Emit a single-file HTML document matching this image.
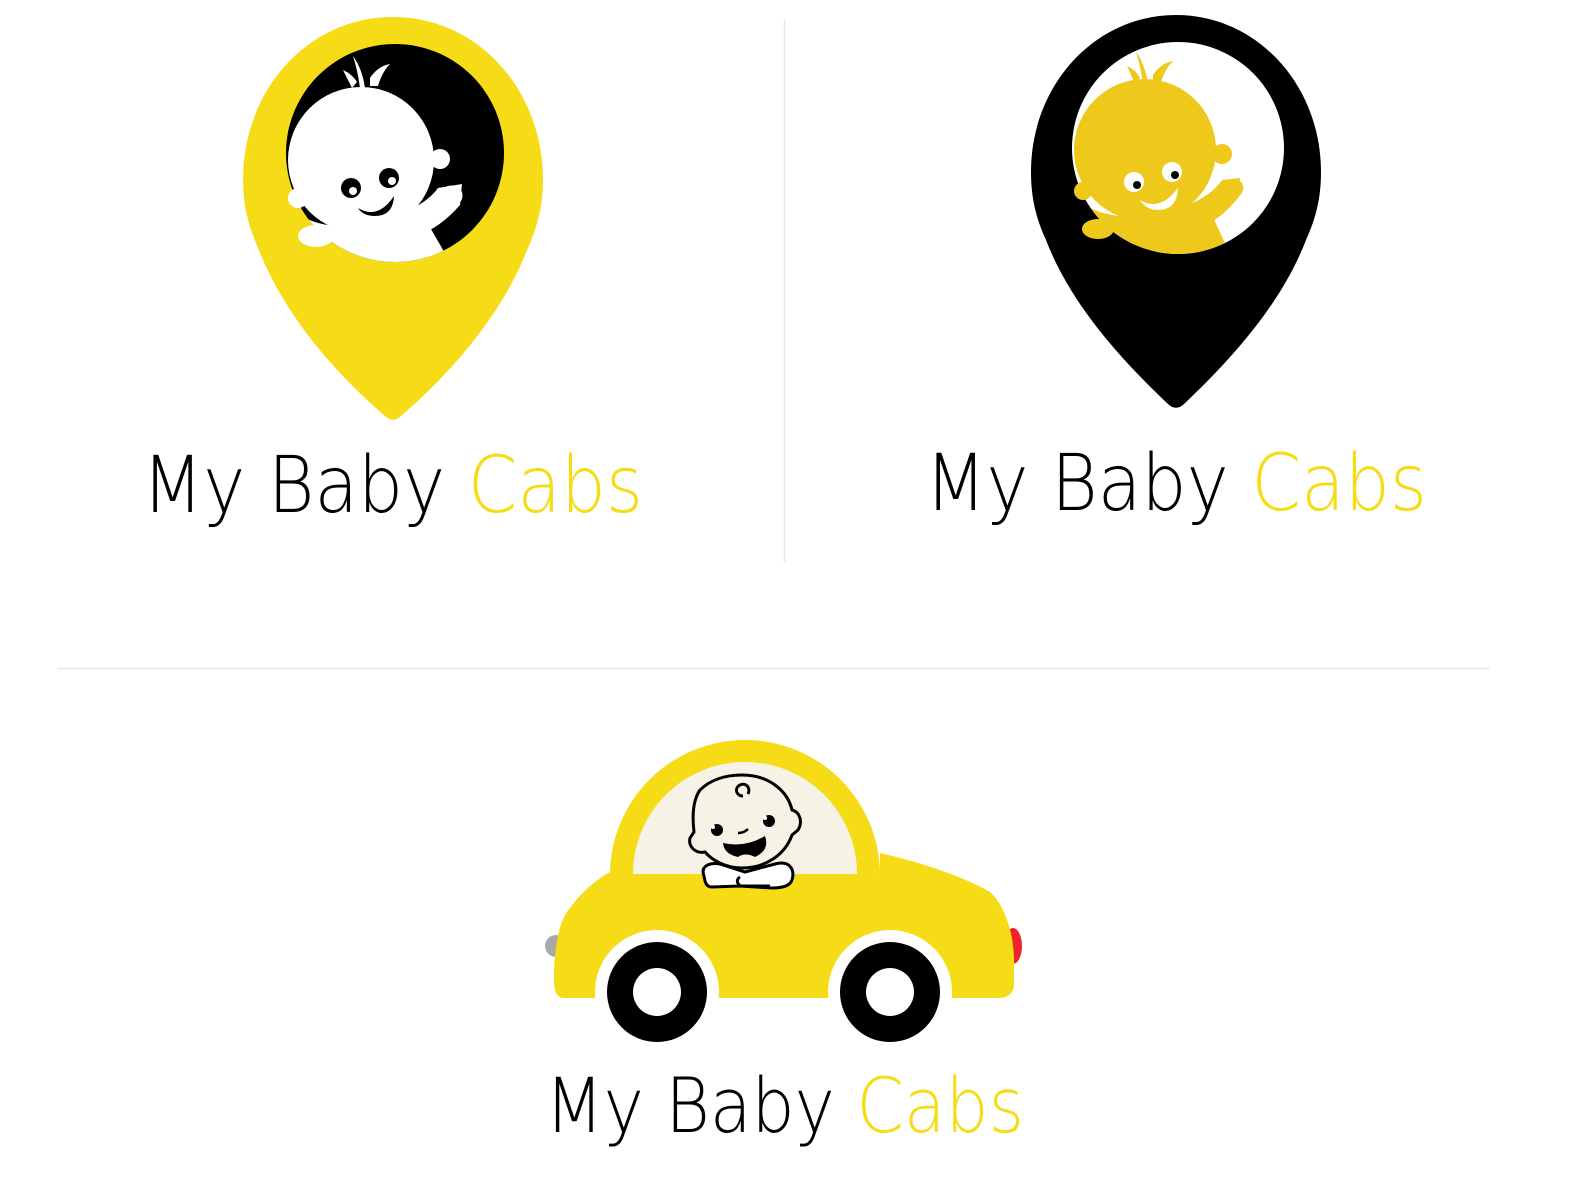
<!DOCTYPE html>
<html><head><meta charset="utf-8"><style>
html,body{margin:0;padding:0;background:#fff;width:1584px;height:1200px;overflow:hidden}
svg{display:block}
text{font-family:"DejaVu Sans","Liberation Sans",sans-serif;font-weight:200}
</style></head><body>
<svg width="1584" height="1200" viewBox="0 0 1584 1200">
<line x1="784.5" y1="20" x2="784.5" y2="562" stroke="#e6e6e6" stroke-width="1.5"/>
<line x1="57" y1="668.5" x2="1489" y2="668.5" stroke="#e6e6e6" stroke-width="1.5"/>

<defs>
<clipPath id="c1"><circle cx="395" cy="153" r="109"/></clipPath>
<clipPath id="c2"><circle cx="1178" cy="148" r="106"/></clipPath>
</defs>
<path d="M393 17 C478 17 543 90 543 180 C543 205 538 225 528 248 C500 320 445 378 401 416 C396 421 390 421 385 416 C341 378 286 320 258 248 C248 225 243 205 243 180 C243 90 308 17 393 17 Z" fill="#f5dc17"/>
<circle cx="395" cy="153" r="109" fill="#000"/>
<g clip-path="url(#c1)">
<circle cx="361" cy="160" r="73" fill="#fff"/>
<path d="M300 215 Q340 240 420 210 L450 262 L330 262 Z" fill="#fff"/>
<path d="M405 212 Q428 202 438 188 L462 184 L460 205 Q440 228 418 235 L440 262 L430 262 Z" fill="#fff"/>
</g>
<path d="M353 56 Q362 68 365 88 L360 88 Q358 72 353 56 Z" fill="#fff"/>
<path d="M343 70 Q352 74 357 82 L352 88 Z" fill="#fff"/>
<path d="M370 78 Q378 66 390 64 Q382 72 378 86 L370 86 Z" fill="#fff"/>
<circle cx="440" cy="159" r="10" fill="#fff"/>
<circle cx="298" cy="198" r="10" fill="#fff"/>
<ellipse cx="450" cy="197" rx="13" ry="11" fill="#fff" transform="rotate(-30 450 197)"/>
<ellipse cx="316" cy="236" rx="18" ry="11" fill="#fff"/>
<path d="M322 232 Q340 250 360 247 L360 240 Z" fill="#fff"/>
<circle cx="351" cy="188" r="10" fill="#000"/><circle cx="353" cy="191" r="4" fill="#fff"/>
<circle cx="389" cy="178" r="10" fill="#000"/><circle cx="392" cy="181" r="4" fill="#fff"/>
<path d="M358 208 Q378 220 394 196 Q393 216 375 216 Q363 216 358 208 Z" fill="#000"/>

<path d="M1176 15 C1257 15 1321 85 1321 172 C1321 198 1316 218 1306 240 C1280 308 1225 365 1184 404 C1179 409 1173 409 1168 404 C1127 365 1072 308 1046 240 C1036 218 1031 198 1031 172 C1031 85 1095 15 1176 15 Z" fill="#000"/>
<circle cx="1178" cy="148" r="106" fill="#fff"/>
<g clip-path="url(#c2)">
<circle cx="1145" cy="150" r="71" fill="#eec81a"/>
<path d="M1085 205 Q1125 230 1205 200 L1230 254 L1110 254 Z" fill="#eec81a"/>
<path d="M1188 205 Q1212 195 1222 180 L1240 178 L1238 198 Q1220 220 1200 228 L1220 254 L1210 254 Z" fill="#eec81a"/>
</g>
<path d="M1136 52 Q1145 64 1148 84 L1143 84 Q1141 68 1136 52 Z" fill="#eec81a"/>
<path d="M1127 66 Q1136 70 1140 78 L1135 84 Z" fill="#eec81a"/>
<path d="M1153 75 Q1161 63 1173 61 Q1165 69 1161 82 L1153 82 Z" fill="#eec81a"/>
<circle cx="1222" cy="154" r="10" fill="#eec81a"/>
<circle cx="1083" cy="191" r="9" fill="#eec81a"/>
<ellipse cx="1231" cy="190" rx="13" ry="10" fill="#eec81a" transform="rotate(-30 1231 190)"/>
<ellipse cx="1098" cy="229" rx="16" ry="10" fill="#eec81a"/>
<circle cx="1134" cy="182" r="10" fill="#fff"/><circle cx="1137" cy="185" r="4" fill="#000"/>
<circle cx="1172" cy="172" r="10" fill="#fff"/><circle cx="1175" cy="175" r="4" fill="#000"/>
<path d="M1140 200 Q1160 212 1178 188 Q1177 210 1158 210 Q1146 210 1140 200 Z" fill="#fff"/>

<text x="142" y="512" font-size="78" textLength="501" lengthAdjust="spacingAndGlyphs" fill="#000">My Baby <tspan fill="#f5dc17">Cabs</tspan></text>
<text x="925" y="510" font-size="78" textLength="502" lengthAdjust="spacingAndGlyphs" fill="#000">My Baby <tspan fill="#f5dc17">Cabs</tspan></text>
<text x="545" y="1132" font-size="76" textLength="479" lengthAdjust="spacingAndGlyphs" fill="#000">My Baby <tspan fill="#f5dc17">Cabs</tspan></text>

<ellipse cx="556" cy="946" rx="11" ry="11" fill="#a8a8a8"/>
<ellipse cx="1013" cy="946" rx="9" ry="18" fill="#f0232b"/>
<path d="M610 875 A135 135 0 0 1 880 875 L880 853 C920 862 965 877 990 892 C1005 905 1014 935 1014 960 L1014 985 C1014 992 1008 998 1000 998 L564 998 C557 998 554 992 554 980 C554 955 557 930 565 915 C578 895 595 880 610 872 Z" fill="#f5dc17"/>
<path d="M633 874 A112 112 0 0 1 857 874 Z" fill="#f6f2e6"/>
<circle cx="657" cy="992" r="62" fill="#fff"/>
<circle cx="890" cy="992" r="62" fill="#fff"/>
<rect x="590" y="998" width="380" height="40" fill="#fff"/>
<circle cx="657" cy="992" r="50" fill="#000"/><circle cx="657" cy="992" r="24" fill="#fff"/>
<circle cx="890" cy="992" r="50" fill="#000"/><circle cx="890" cy="992" r="24" fill="#fff"/>
<g stroke="#000" stroke-width="3" fill="#f6f2e6">
<path d="M704 876 C700 866 710 862 720 864 L745 872 L775 864 C790 860 795 870 792 880 C790 886 782 888 772 888 L740 886 L712 887 C706 887 705 882 704 876 Z" fill="#fff"/>
<path d="M740 877 C735 880 738 886 742 886 L770 886" fill="#fff"/>
<path d="M742 775 C770 775 788 792 792 810 C800 812 803 822 798 830 L792 835 C785 855 765 868 742 868 C725 868 712 860 705 852 C695 854 688 846 690 838 L694 832 C692 815 693 800 700 790 C710 780 725 775 742 775 Z"/>
</g>
<path d="M743 796 C736 796 734 788 740 785 C746 782 751 788 748 794" stroke="#000" stroke-width="3" fill="none"/>
<circle cx="717" cy="830" r="6" fill="#000"/><circle cx="713" cy="827" r="2" fill="#fff"/>
<circle cx="769" cy="821" r="6" fill="#000"/><circle cx="765" cy="818" r="2" fill="#fff"/>
<path d="M738 833 Q744 833 748 829" stroke="#000" stroke-width="2.5" fill="none"/>
<path d="M723 843 Q745 848 765 836 Q770 850 755 857 Q745 852 738 857 Q724 854 723 843 Z" fill="#000"/>
</svg>
</body></html>
